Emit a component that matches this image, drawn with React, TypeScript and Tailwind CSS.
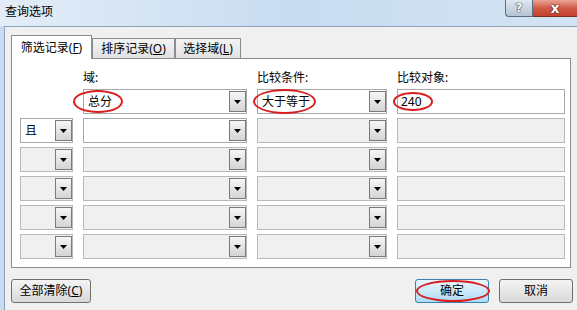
const Arrow = () => (
    <svg width="7" height="4" viewBox="0 0 7 4">
        <path d="M0 0h7L3.5 4z" fill="#000" />
    </svg>
);

type ComboProps = { text?: string; on?: boolean };

const Combo = ({ text, on }: ComboProps) => (
    <div className={`flex h-[25px] items-stretch border ${on ? 'border-[#a9a9a9] bg-white' : 'border-[#b9b9b9] bg-[#f0f0f0]'}`}>
        <div className="flex flex-1 items-center pl-[4px] text-[12px] leading-[14px] text-black">{text}</div>
        <div className="my-px flex w-[17px] items-center justify-center border border-[#7a7a7a] bg-gradient-to-b from-[#f6f6f6] to-[#d4d4d4]">
            <Arrow />
        </div>
    </div>
);

const ValueBox = ({ text, on }: ComboProps) => (
    <div className={`flex h-[25px] items-center border pl-[3px] text-[12px] leading-[14px] text-black ${on ? 'border-[#a9a9a9] bg-white' : 'border-[#b9b9b9] bg-[#f0f0f0]'}`}>
        {text}
    </div>
);

const Ring = ({ className }: { className: string }) => (
    <span className={`pointer-events-none absolute rounded-[50%] border-2 border-[#d81e1e] ${className}`} />
);

export default function App() {
    const emptyRows = [0, 1, 2, 3];

    return (
        <div className="flex h-[310px] w-[577px] flex-col overflow-hidden font-['Noto_Sans','Noto_Sans_CJK_SC',sans-serif] text-black">
            {/* title bar */}
            <div className="flex h-[26px] items-start justify-between bg-gradient-to-r from-[#e3edf8] via-[#c8dcf0] to-[#d3e3f3]">
                <div className="pl-[5px] pt-[5px] text-[12px] leading-[14px]">查询选项</div>
                <div className="flex">
                    <div className="flex h-[17px] w-[28px] items-center justify-center rounded-bl-[4px] border border-t-0 border-[#5b6b80] bg-gradient-to-b from-[#dfe7f0] to-[#b5c3d3] font-['DejaVu_Sans',sans-serif] text-[12px] font-bold leading-[12px] text-white [text-shadow:0_0_1px_#333,0_0_1px_#333,0_0_1px_#333]">?</div>
                    <div className="flex h-[17px] w-[44px] items-center justify-center border-b border-[#7a3020] bg-gradient-to-b from-[#e8a595] via-[#cf5a46] to-[#c4402c] font-['DejaVu_Sans',sans-serif] text-[14px] font-bold leading-[12px] text-white [text-shadow:0_0_1px_#411,0_0_1px_#411,0_0_1px_#411]">x</div>
                </div>
            </div>

            <div className="flex min-h-0 flex-1">
                <div className="w-[4px] bg-[#cadcef]" />
                <div className="flex flex-1 flex-col border-l border-t border-[#8da2bc] bg-[#f0f0f0] pl-[6px] pt-[8px]">
                    {/* tabs */}
                    <div className="relative z-10 flex h-[24px] items-end text-[12px] leading-[14px]">
                        <div className="flex h-[24px] w-[81px] items-center justify-center border border-b-0 border-[#898c95] bg-white">
                            筛选记录(<span className="underline">F</span>)
                        </div>
                        <div className="flex h-[21px] w-[83px] items-center justify-center border border-[#898c95] bg-gradient-to-b from-[#f4f4f4] to-[#e1e1e1]">
                            排序记录(<span className="underline">O</span>)
                        </div>
                        <div className="flex h-[21px] w-[66px] items-center justify-center border border-[#898c95] bg-gradient-to-b from-[#f4f4f4] to-[#e1e1e1]">
                            选择域(<span className="underline">L</span>)
                        </div>
                    </div>

                    {/* panel */}
                    <div className="-mt-px h-[210px] w-[560px] border border-[#898c95] bg-white pl-[8px] pt-[12px]">
                        <div className="grid grid-cols-[53px_164px_130px_168px] gap-x-[10px] gap-y-[4px]">
                            <div className="h-[14px]" />
                            <div className="text-[12px] leading-[14px]">域:</div>
                            <div className="text-[12px] leading-[14px]">比较条件:</div>
                            <div className="text-[12px] leading-[14px]">比较对象:</div>

                            <div />
                            <div className="relative">
                                <Combo text="总分" on />
                                <Ring className="left-[-10px] top-[1px] h-[23px] w-[50px]" />
                            </div>
                            <div className="relative">
                                <Combo text="大于等于" on />
                                <Ring className="left-[-4px] top-0 h-[25px] w-[63px]" />
                            </div>
                            <div className="relative">
                                <ValueBox text="240" on />
                                <Ring className="left-[-4px] top-[3px] h-[19px] w-[40px]" />
                            </div>

                            <Combo text="且" on />
                            <Combo on />
                            <Combo />
                            <ValueBox />

                            {emptyRows.map(i => (
                                <div key={i} className="contents">
                                    <Combo />
                                    <Combo />
                                    <Combo />
                                    <ValueBox />
                                </div>
                            ))}
                        </div>
                    </div>

                    {/* buttons */}
                    <div className="mt-[11px] flex justify-between pr-[4px] text-[12px] leading-[14px]">
                        <button className="h-[24px] w-[80px] rounded-[3px] border border-[#707070] bg-gradient-to-b from-[#f4f4f4] to-[#d9d9d9]">
                            全部清除(<span className="underline">C</span>)
                        </button>
                        <div className="flex gap-[10px]">
                            <div className="relative">
                                <button className="h-[24px] w-[74px] rounded-[3px] border border-[#3c7fb1] bg-gradient-to-b from-[#e9f6fd] to-[#aedcf6]">确定</button>
                                <Ring className="left-[1px] top-[1px] h-[22px] w-[74px]" />
                            </div>
                            <button className="h-[24px] w-[74px] rounded-[3px] border border-[#707070] bg-gradient-to-b from-[#f4f4f4] to-[#d9d9d9]">取消</button>
                        </div>
                    </div>
                </div>
            </div>
        </div>
    );
}
